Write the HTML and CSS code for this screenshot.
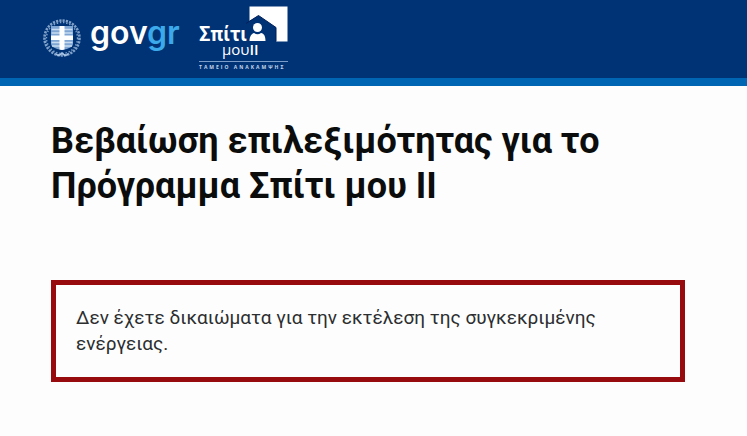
FILE: index.html
```html
<!DOCTYPE html>
<html lang="el">
<head>
<meta charset="utf-8">
<title>Βεβαίωση επιλεξιμότητας</title>
<link rel="stylesheet" href="styles.css">
</head>
<body>
<header class="site-header">
  <div class="gov-brand">
    <svg class="emblem" viewBox="0 0 40 40" aria-hidden="true">
      <g fill="none" stroke="#a9c5e6">
        <circle cx="20" cy="20" r="17.5" stroke-width="2.6" stroke-dasharray="2.2 1.1" opacity=".75"/>
        <circle cx="20" cy="20" r="15.5" stroke-width="1.4" stroke-dasharray="1.4 1.8" opacity=".75"/>
        <path d="M14 36q3 3 6-1q3 4 6 1" stroke-width="1.5"/>
      </g>
      <path d="M9 8H31V26Q31 30 20 32Q9 30 9 26Z" fill="#7fa5d3"/>
      <path d="M9.500 11.500h21M9.500 15h21M9.500 24.500h21M10 28h20" stroke="#c7dcf1" stroke-width="1.300"/>
      <path d="M17.500 8h5v9.500H31v4.500h-8.500v9.500L20 32l-2.500-.5V22H9v-4.500h8.500Z" fill="#fff"/>
    </svg>
    <span class="gov-name">gov<span class="gov-suffix">gr</span></span>
  </div>
  <svg class="program-logo" viewBox="0 0 96 66" role="img" aria-label="Σπίτι μου ΙΙ, Ταμείο Ανάκαμψης">
    <path d="M51.500 1.500H89.500V36.500H78V22.500L60.500 10.500L51.500 16Z" fill="#fff"/>
    <path d="M48 18.500L60.500 10.500L78 22.500V36.500" fill="none" stroke="#001f5c" stroke-width="1"/>
    <circle cx="59.500" cy="22.500" r="4.500" fill="#fff"/>
    <path d="M51.500 36C51.500 31 54 28.500 56 28Q59.500 30.500 63 28C66 28.500 67.500 31 67.500 36Z" fill="#fff"/>
    <text class="logo-title" x="1" y="36">Σπίτι</text>
    <text class="logo-sub" x="24" y="50">μου<tspan class="logo-number">ΙΙ</tspan></text>
    <path d="M1 56.500H90" stroke="#7a9cc9" stroke-width="1"/>
    <text class="logo-fund" x="1" y="64">ΤΑΜΕΙΟ ΑΝΑΚΑΜΨΗΣ</text>
  </svg>
</header>
<main class="content">
  <h1 class="page-title">Βεβαίωση επιλεξιμότητας για το Πρόγραμμα Σπίτι μου II</h1>
  <div class="error-box" role="alert">
    <p class="error-text">Δεν έχετε δικαιώματα για την εκτέλεση της συγκεκριμένης ενέργειας.</p>
  </div>
</main>
</body>
</html>
```
FILE: styles.css
```css
* {
  box-sizing: border-box;
}

body {
  margin: 0;
  background: #fdfdfd;
  color: #0b0c0c;
  font-family: Roboto, "Liberation Sans", sans-serif;
}

.site-header {
  display: flex;
  align-items: flex-start;
  gap: 18px;
  padding: 5px 42px 7px;
  background: #003375;
  border-bottom: 8px solid #0065b3;
}

.gov-brand {
  display: flex;
  align-items: flex-start;
  gap: 8px;
  padding-top: 8px;
}

.emblem {
  width: 40px;
  height: 40px;
  margin-top: 5px;
}

.gov-name {
  color: #fff;
  font: 600 32px/40px Inter, sans-serif;
}

.gov-suffix {
  color: #3ba9ea;
}

.program-logo {
  width: 96px;
  height: 66px;
  fill: #fff;
}

.logo-title {
  font: 700 20px Roboto, sans-serif;
}

.logo-sub {
  font: 400 15px "Open Sans", sans-serif;
}

.logo-number {
  font-weight: 600;
}

.logo-fund {
  font: 700 5px "Open Sans", sans-serif;
  letter-spacing: 2px;
  fill: #c3d5ec;
}

.content {
  padding: 33px 62px 54px 51px;
}

.page-title {
  margin: 0;
  font-size: 36px;
  font-weight: 700;
  line-height: 45px;
}

.error-box {
  margin-top: 71px;
  padding: 20px;
  border: 5px solid #970b0f;
}

.error-text {
  margin: 0;
  color: #2c2e30;
  font-size: 19px;
  line-height: 26px;
}
```
